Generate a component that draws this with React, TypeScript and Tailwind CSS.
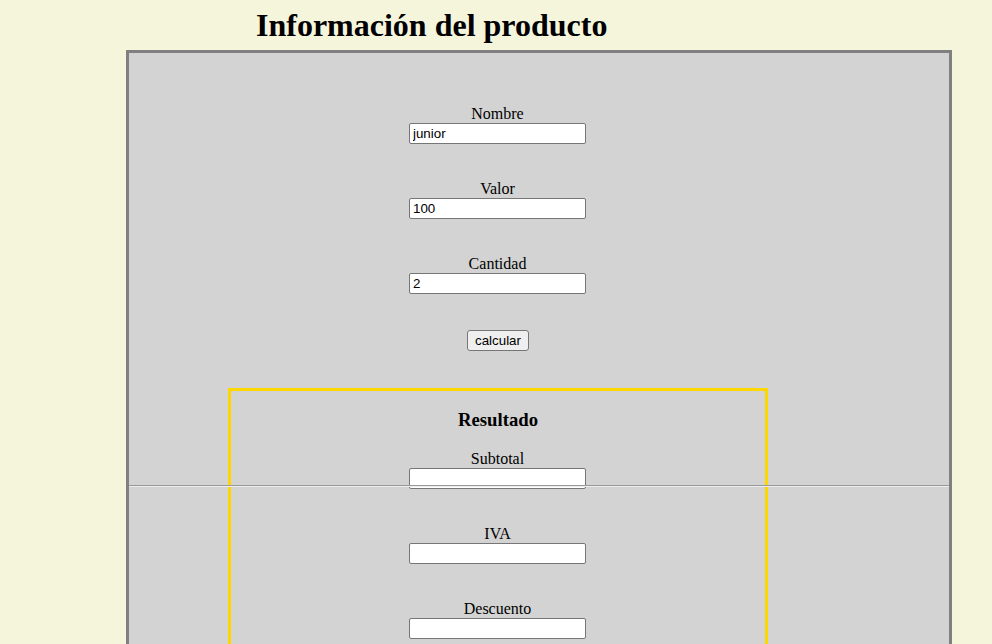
import React from "react";

// campos del formulario
const entradas = [
  { label: "Nombre", valor: "junior" },
  { label: "Valor", valor: "100" },
  { label: "Cantidad", valor: "2" },
];

const resultados = ["Subtotal", "IVA", "Descuento"];

const Campo = ({ label, valor, first }: { label: string; valor?: string; first?: boolean }) => (
  <div className={`self-stretch pr-[1px] flex flex-col items-center ${first ? "" : "mt-[36px]"}`}>
    <label className="block h-[18px] leading-[18px] text-[16px]">{label}</label>
    <input
      type="text"
      defaultValue={valor ?? ""}
      className="block w-[177px] h-[21px] border border-[#767676] rounded-[2px] bg-white px-[3px] text-[13.33px] leading-[15px] font-['Liberation_Sans',Arial,sans-serif] text-black outline-none"
    />
  </div>
);

export default function App() {
  return (
    <div className="min-h-screen bg-[#f5f5dc] pt-[7px] pb-[40px] font-['Liberation_Serif','Times_New_Roman',serif] text-black">
      <h1 className="ml-[256px] mb-[7px] text-[32px] leading-[36px] font-bold">Información del producto</h1>

      <div className="relative ml-[126px] w-[826px] border-[3px] border-[#808080] bg-[#d3d3d3] pt-[52px] pb-[40px]">
        <div className="ml-[99px] w-[540px] flex flex-col items-center">
          {entradas.map((e, i) => (
            <Campo key={e.label} label={e.label} valor={e.valor} first={i === 0} />
          ))}

          <button className="mt-[36px] h-[21px] px-[7px] border border-[#767676] rounded-[3px] bg-[#efefef] text-[13.33px] leading-[15px] font-['Liberation_Sans',Arial,sans-serif] text-black">
            calcular
          </button>

          {/* resultado */}
          <div className="mt-[37px] w-full border-[3px] border-[#ffd700] pt-[18px] pb-[90px] flex flex-col items-center">
            <h3 className="mb-[20px] text-[18.72px] leading-[21px] font-bold">Resultado</h3>
            {resultados.map((r, i) => (
              <Campo key={r} label={r} first={i === 0} />
            ))}
          </div>
        </div>

        {/* línea */}
        <div className="absolute left-0 right-0 top-[432px] h-[2px] border-t border-[#9a9a9a] bg-[#ececec]"></div>
      </div>
    </div>
  );
}
